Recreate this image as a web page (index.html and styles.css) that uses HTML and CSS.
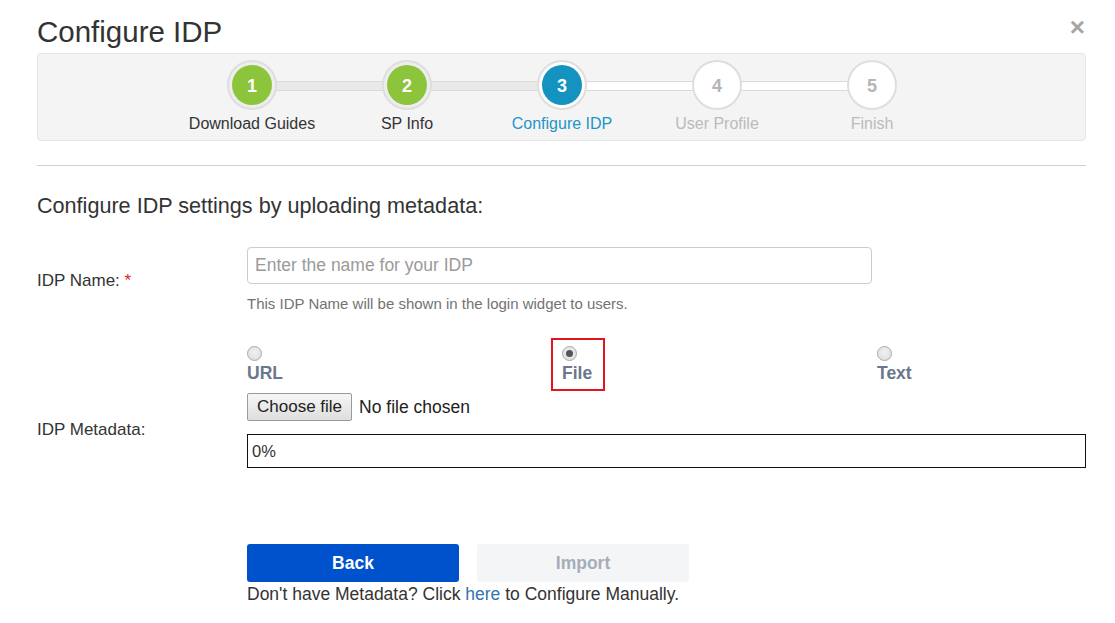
FILE: index.html
```html
<!DOCTYPE html>
<html>
<head>
<meta charset="utf-8">
<title>Configure IDP</title>
<link rel="stylesheet" href="styles.css">
</head>
<body>
<div class="modal">
  <div class="modal-header">
    <h1 class="title">Configure IDP</h1>
    <span class="close">&times;</span>
  </div>

  <div class="stepper">
    <div class="step done">
      <div class="circle"><span class="dot">1</span></div>
      <div class="step-label">Download Guides</div>
    </div>
    <div class="step done">
      <div class="circle"><span class="dot">2</span></div>
      <div class="step-label">SP Info</div>
    </div>
    <div class="step active">
      <div class="circle"><span class="dot">3</span></div>
      <div class="step-label">Configure IDP</div>
    </div>
    <div class="step todo">
      <div class="circle"><span class="dot">4</span></div>
      <div class="step-label">User Profile</div>
    </div>
    <div class="step todo">
      <div class="circle"><span class="dot">5</span></div>
      <div class="step-label">Finish</div>
    </div>
  </div>

  <hr class="divider">

  <h2 class="subtitle">Configure IDP settings by uploading metadata:</h2>

  <div class="form-row name-row">
    <label class="form-label name-label">IDP Name: <span class="req">*</span></label>
    <div class="field">
      <input class="text-input" type="text" placeholder="Enter the name for your IDP">
      <div class="help">This IDP Name will be shown in the login widget to users.</div>
    </div>
  </div>

  <div class="form-row meta-row">
    <label class="form-label meta-label">IDP Metadata:</label>
    <div class="field">
      <div class="radios">
        <label class="option"><input type="radio" name="src" class="radio"><span class="opt-text">URL</span></label>
        <label class="option highlighted"><input type="radio" name="src" class="radio" checked><span class="opt-text">File</span><span class="mark"></span></label>
        <label class="option"><input type="radio" name="src" class="radio"><span class="opt-text">Text</span></label>
      </div>
      <div class="file-line">
        <span class="file-btn">Choose file</span>
        <span class="file-name">No file chosen</span>
      </div>
      <div class="progress">0%</div>
    </div>
  </div>

  <div class="actions">
    <div class="buttons">
      <button class="btn btn-primary">Back</button>
      <button class="btn btn-disabled">Import</button>
    </div>
    <p class="manual">Don't have Metadata? Click <a href="#" class="link">here</a> to Configure Manually.</p>
  </div>
</div>
</body>
</html>
```
FILE: styles.css
```css
* { box-sizing: border-box; }

body {
  margin: 0;
  background: #fff;
  font-family: "Liberation Sans", Arial, sans-serif;
  color: #333;
}

.modal {
  width: 1086px;
  padding: 15px 0 0 37px;
}

.modal-header {
  display: flex;
  justify-content: space-between;
  align-items: flex-start;
  margin-bottom: 5px;
}

.title {
  margin: 0;
  font-size: 29.5px;
  line-height: 33px;
  font-weight: normal;
  color: #333;
}

.close {
  font-size: 26px;
  font-weight: bold;
  line-height: 26px;
  color: #a6a6a6;
  margin-top: -1px;
  margin-right: 1px;
}

/* Stepper */
.stepper {
  display: flex;
  justify-content: center;
  background: #f4f4f4;
  border: 1px solid #e6e6e6;
  border-radius: 4px;
  padding: 6px 0 7px 1px;
}

.step {
  position: relative;
  width: 155px;
  display: flex;
  flex-direction: column;
  align-items: center;
}

.step + .step::before {
  content: "";
  position: absolute;
  top: 21px;
  right: 50%;
  width: 155px;
  height: 8px;
  background: #fff;
  border-top: 1px solid #dadada;
  border-bottom: 1px solid #dadada;
  z-index: 0;
}

.step.done + .step.done::before,
.step.done + .step.active::before {
  background: #e9e9e9;
}

.circle {
  position: relative;
  z-index: 1;
  width: 50px;
  height: 50px;
  border-radius: 50%;
  border: 2px solid #dedede;
  background: #fff;
  display: flex;
  align-items: center;
  justify-content: center;
}

.step.done .circle { background: #eeeeee; }

.dot {
  width: 40px;
  height: 40px;
  border-radius: 50%;
  display: flex;
  align-items: center;
  justify-content: center;
  font-size: 18px;
  font-weight: bold;
  color: #fff;
  padding-top: 2px;
}

.step.done .dot { background: #8cc43c; }
.step.active .dot { background: #1493c0; }
.step.todo .dot { background: #fff; color: #b5b5b5; }

.step-label {
  margin-top: 5px;
  font-size: 16px;
  line-height: 18px;
  white-space: nowrap;
}

.step.done .step-label { color: #333; }
.step.active .step-label { color: #1c96c6; }
.step.todo .step-label { color: #bbbbbb; }

.divider {
  margin: 24px 0 0;
  border: 0;
  border-top: 1px solid #cfcfcf;
  height: 0;
}

.subtitle {
  margin: 27px 0 0;
  font-size: 21.6px;
  line-height: 26px;
  font-weight: normal;
  color: #333;
}

/* Form */
.form-row {
  display: grid;
  grid-template-columns: 210px 839px;
}

.name-row {
  margin-top: 28px;
  align-items: center;
}

.form-label {
  font-size: 17px;
  line-height: 20px;
  color: #333;
}

.name-label { padding-top: 3px; }

.req { color: #e0201e; }

.text-input {
  display: block;
  width: 625px;
  height: 37px;
  border: 1px solid #cccccc;
  border-radius: 4px;
  padding: 0 7px;
  font-family: "Liberation Sans", Arial, sans-serif;
  font-size: 17.5px;
  color: #333;
  background: #fff;
}

.text-input::placeholder { color: #9a9a9a; }

.help {
  margin-top: 11px;
  font-size: 15px;
  line-height: 17px;
  color: #737373;
}

.meta-row {
  margin-top: 34px;
}

.meta-label {
  align-self: start;
  margin-top: 74px;
}

.radios {
  display: grid;
  grid-template-columns: 315px 315px 1fr;
}

.option {
  position: relative;
  display: flex;
  flex-direction: column;
  align-items: flex-start;
}

.radio {
  appearance: none;
  -webkit-appearance: none;
  margin: 0;
  width: 15px;
  height: 15px;
  border-radius: 50%;
  border: 1px solid #a9a9a9;
  background: radial-gradient(circle at 50% 40%, #f0f0f0 0%, #dcdcdc 100%);
  position: relative;
}

.radio:checked::after {
  content: "";
  position: absolute;
  left: 3px;
  top: 3px;
  width: 7px;
  height: 7px;
  border-radius: 50%;
  background: #555;
}

.opt-text {
  margin-top: 2px;
  font-size: 17.5px;
  line-height: 20px;
  font-weight: bold;
  color: #6b778c;
}

.mark {
  position: absolute;
  left: -11px;
  top: -8px;
  width: 54px;
  height: 53px;
  border: 2px solid #e3141e;
}

.file-line {
  margin-top: 10px;
  display: flex;
  align-items: center;
  gap: 7px;
}

.file-btn {
  display: inline-flex;
  align-items: center;
  height: 28px;
  padding: 0 9px;
  border: 1px solid #9a9a9a;
  border-radius: 2px;
  background: linear-gradient(#f6f6f6, #dedede);
  font-size: 17px;
  color: #222;
}

.file-name {
  font-size: 17.5px;
  color: #222;
}

.progress {
  margin-top: 13px;
  height: 34px;
  border: 1px solid #111;
  padding-left: 4px;
  display: flex;
  align-items: center;
  font-size: 16.5px;
  color: #333;
}

.actions {
  margin: 76px 0 0 210px;
}

.buttons {
  display: flex;
  gap: 18px;
}

.btn {
  width: 212px;
  height: 38px;
  border: 0;
  border-radius: 3px;
  font-family: "Liberation Sans", Arial, sans-serif;
  font-size: 17.5px;
  font-weight: bold;
  cursor: pointer;
}

.btn-primary { background: #0052cc; color: #fff; }
.btn-disabled { background: #f4f5f7; color: #a5adba; }

.manual {
  margin: 2px 0 0;
  font-size: 17.5px;
  line-height: 20px;
  color: #333;
}

.link { color: #3572b0; text-decoration: none; }
```
